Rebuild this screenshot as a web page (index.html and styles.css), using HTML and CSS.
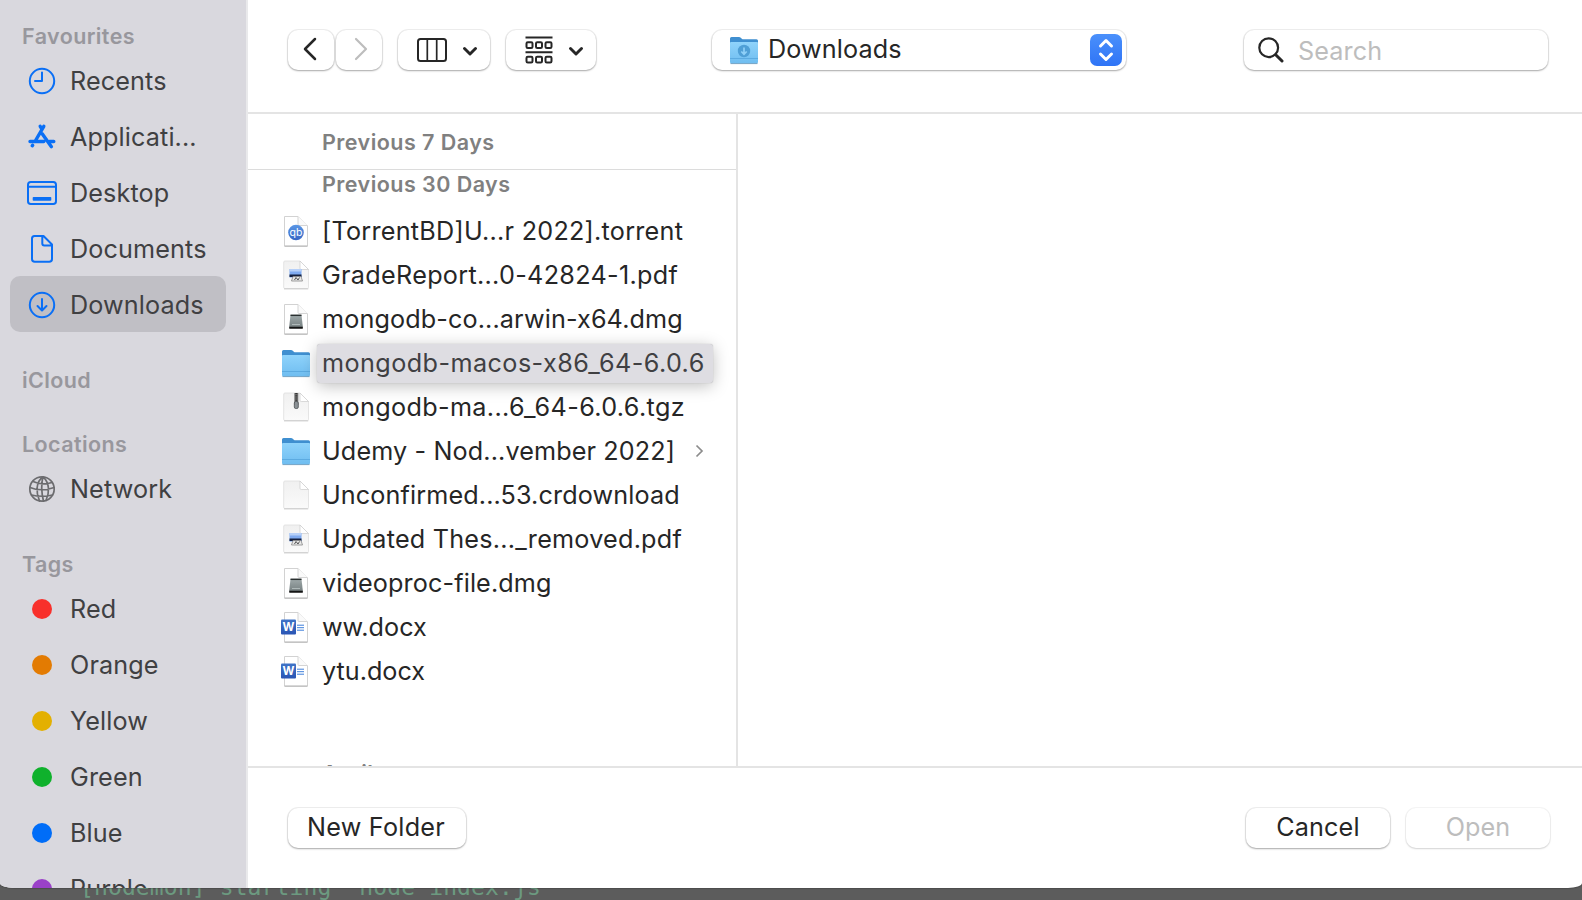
FILE: index.html
```html
<!DOCTYPE html>
<html lang="en">
<head>
<meta charset="utf-8">
<title>Open</title>
<link rel="stylesheet" href="styles.css">
</head>
<body>
<svg class="defs" aria-hidden="true">
  <defs>
    <linearGradient id="folderFront" x1="0" y1="0" x2="0" y2="1"><stop offset="0" stop-color="#8fd3fb"/><stop offset="1" stop-color="#6fbdf0"/></linearGradient>
    <linearGradient id="paper" x1="0" y1="0" x2="0" y2="1"><stop offset="0" stop-color="#f0f0f0"/><stop offset="1" stop-color="#fafafa"/></linearGradient>
    <linearGradient id="drive" x1="0" y1="0" x2="0" y2="1"><stop offset="0" stop-color="#9fa9aa"/><stop offset=".8" stop-color="#7b8586"/><stop offset="1" stop-color="#111"/></linearGradient>
    <linearGradient id="wordBlue" x1="0" y1="0" x2="0" y2="1"><stop offset="0" stop-color="#3f74c8"/><stop offset="1" stop-color="#2a55b4"/></linearGradient>
    <linearGradient id="qbBlue" x1="0" y1="0" x2="0" y2="1"><stop offset="0" stop-color="#5b97e6"/><stop offset="1" stop-color="#3566c4"/></linearGradient>
    <symbol id="folder" viewBox="0 0 32 32">
      <path d="M2 27V4.500q0-1.500 1.500-1.500h7.500q1 0 1.800.8l1 .9q.7.600 1.700.600H28.500q1.500 0 1.500 1.500V27z" fill="#3f8fd0"/>
      <path d="M2 9q0-1 1-1H29q1 0 1 1V28q0 1.500-1.500 1.500H3.500Q2 29.500 2 28z" fill="url(#folderFront)"/>
      <path d="M2 24.500H30" stroke="#56a5dc" stroke-width=".8"/>
      <path d="M2.500 29.600H29.500" stroke="#6d9dbd" stroke-width=".9"/>
    </symbol>
    <symbol id="white-page" viewBox="0 0 32 32">
      <path d="M4.500 1.500H18L27.500 11V31H4.500z" fill="#fff" stroke="#d2d2d2"/>
      <path d="M4.500 31.200H27.500" stroke="#a6a6a6" stroke-width=".8"/>
      <path d="M18 1.500V9.500q0 1 1 1H27.500" fill="#fafafa" stroke="#d4d4d4"/>
    </symbol>
    <symbol id="grey-page" viewBox="0 0 32 32">
      <path d="M5 2H20L28.500 10.500V28.500q0 1-1 1H5q-1.300 0-1.300-1V3.200Q3.700 2 5 2z" fill="url(#paper)" stroke="#dedede" stroke-width=".8"/>
      <path d="M4 29.900H28.200" stroke="#c0c0c0" stroke-width=".8"/>
      <path d="M20 2V9.300q0 1.200 1.200 1.200H28.500z" fill="#fff" stroke="#cccccc" stroke-width=".7"/>
    </symbol>
    <symbol id="torrent" viewBox="0 0 32 32">
      <use href="#white-page"/>
      <circle cx="16" cy="17.500" r="7.800" fill="url(#qbBlue)"/>
      <text x="16" y="21" class="qb-mark">qb</text>
    </symbol>
    <symbol id="pdf" viewBox="0 0 32 32">
      <use href="#grey-page"/>
      <rect x="9.500" y="10" width="12" height="8.500" fill="#7faaf0"/>
      <rect x="9.500" y="10" width="12" height="2.500" fill="#b7d0f8"/>
      <path d="M9.500 15.500H21.500V18H9.500z" fill="#15203f"/>
      <path d="M13 17.500h8l1.500 4.500H11.500z" fill="#e8e8e8" stroke="#888" stroke-width=".8"/>
      <path d="M14.500 21l1.500-2.500 2 2.500 1.500-2.500" fill="none" stroke="#444" stroke-width=".9"/>
    </symbol>
    <symbol id="dmg" viewBox="0 0 32 32">
      <use href="#white-page"/>
      <path d="M10.500 12H21.500L22.800 23.500V25.500H9.200V23.500z" fill="url(#drive)"/>
      <path d="M10.500 12.300H21.500" stroke="#2a3030" stroke-width="1.500"/>
      <path d="M9.500 24.800H22.600" stroke="#111" stroke-width="1.400"/>
      <path d="M12 21.500h8" stroke="#aeb8b8" stroke-width="1"/>
    </symbol>
    <symbol id="zip" viewBox="0 0 32 32">
      <use href="#grey-page"/>
      <rect x="14.300" y="2" width="4" height="12" fill="#777"/>
      <path d="M16.300 2V12" stroke="#333" stroke-width="2" stroke-dasharray="1.200 1"/>
      <rect x="14.300" y="10.500" width="4" height="7" rx="1.500" fill="#8b9195" stroke="#4e5356" stroke-width=".8"/>
    </symbol>
    <symbol id="word" viewBox="0 0 32 32">
      <use href="#white-page"/>
      <path d="M17 14.200H24M17 16.700H24M17 19.200H24" stroke="#3d7edb" stroke-width="1"/>
      <rect x="1" y="8.500" width="15" height="15" rx="1" fill="url(#wordBlue)"/>
      <text x="8.500" y="20" class="word-mark">W</text>
    </symbol>
    <symbol id="chev-down" viewBox="0 0 16 10"><path d="M2.500 2.500L8 8L13.500 2.500" fill="none" stroke="#262626" stroke-width="2.900" stroke-linecap="round" stroke-linejoin="round"/></symbol>
  </defs>
</svg>

<div class="terminal-line">[nodemon] starting `node index.js`</div>

<div class="dialog">
  <nav class="sidebar">
    <section class="group">
      <h2 class="group-title">Favourites</h2>
      <a class="item"><svg class="side-icon" viewBox="0 0 32 32"><circle cx="16" cy="16" r="12.200"/><path d="M16 7.500V16H9"/></svg>Recents</a>
      <a class="item"><svg class="side-icon" viewBox="0 0 32 32"><path class="bold" d="M14.200 5.300L15.800 8M17.800 5.300L9 20.500M4 20.500H17.800M23.500 20.500H27.800M6.200 24.800L6.700 24.200M16.200 12.700L25.400 25.700"/></svg>Applicati...</a>
      <a class="item"><svg class="side-icon" viewBox="0 0 32 32"><rect x="2" y="5" width="28" height="22" rx="2.800"/><path d="M2 9.700H30"/><rect class="solid" x="6.700" y="20" width="18.600" height="3.800" rx=".8"/></svg>Desktop</a>
      <a class="item"><svg class="side-icon" viewBox="0 0 32 32"><path d="M8.500 3H17.500L26 11.500V26q0 2.800-2.800 2.800H8.800Q6 28.800 6 26V5.500Q6 3 8.500 3zM16.300 3.500V10.500q0 2 2 2H25.500"/></svg>Documents</a>
      <a class="item selected"><svg class="side-icon" viewBox="0 0 32 32"><circle cx="16" cy="16" r="12.200"/><path d="M16 10V21.300M11.500 17L16 21.500L20.500 17"/></svg>Downloads</a>
    </section>
    <section class="group">
      <h2 class="group-title">iCloud</h2>
    </section>
    <section class="group">
      <h2 class="group-title">Locations</h2>
      <a class="item"><svg class="side-icon grey" viewBox="0 0 32 32"><circle cx="16" cy="16" r="12.200"/><path d="M17 3.800C9.500 9 10 20 13.500 28M17 3.800C24 10 23.500 20 20 27.500M17 3.800C14.800 12 15.500 20 17.500 28.200M7 8.500Q16 12.500 26 9.500M4 14.500Q15 19 28.200 14.500M5.500 22Q16 24.500 26.500 22"/></svg>Network</a>
    </section>
    <section class="group">
      <h2 class="group-title">Tags</h2>
      <a class="item"><i class="tag red"></i>Red</a>
      <a class="item"><i class="tag orange"></i>Orange</a>
      <a class="item"><i class="tag yellow"></i>Yellow</a>
      <a class="item"><i class="tag green"></i>Green</a>
      <a class="item"><i class="tag blue"></i>Blue</a>
      <a class="item"><i class="tag purple"></i>Purple</a>
    </section>
  </nav>

  <main class="main">
    <header class="toolbar">
      <button class="btn nav"><svg width="14" height="24" viewBox="0 0 14 24"><path d="M12 2L2 12L12 22" fill="none" stroke="#262626" stroke-width="2.500" stroke-linecap="round" stroke-linejoin="round"/></svg></button>
      <button class="btn nav"><svg width="14" height="24" viewBox="0 0 14 24"><path d="M2 2L12 12L2 22" fill="none" stroke="#bdbdbd" stroke-width="2.200" stroke-linecap="round" stroke-linejoin="round"/></svg></button>
      <button class="btn view">
        <svg width="30" height="24" viewBox="0 0 30 24" fill="none" stroke="#262626"><rect x="1" y="1" width="28" height="22" rx="2.500" stroke-width="2"/><path d="M10.300 2V22M19.700 2V22" stroke-width="1.700"/></svg>
        <svg width="16" height="10"><use href="#chev-down"/></svg>
      </button>
      <button class="btn arrange">
        <svg width="28" height="28" viewBox="0 0 28 28" fill="none" stroke="#262626" stroke-width="2"><path d="M.5 1.500H27.500M.5 16.200H27.500"/><rect x="1.500" y="6.300" width="6" height="5.800" rx="1.300"/><rect x="11" y="6.300" width="6" height="5.800" rx="1.300"/><rect x="20.500" y="6.300" width="6" height="5.800" rx="1.300"/><rect x="1.500" y="20.800" width="6" height="5.800" rx="1.300"/><rect x="11" y="20.800" width="6" height="5.800" rx="1.300"/><rect x="20.500" y="20.800" width="6" height="5.800" rx="1.300"/></svg>
        <svg width="16" height="10"><use href="#chev-down"/></svg>
      </button>
      <div class="btn location">
        <svg width="32" height="32" viewBox="0 0 32 32"><use href="#folder"/><circle cx="16" cy="17" r="6.200" fill="#4f9fd6"/><path d="M16 13.500V20M13.300 17.500L16 20.300L18.700 17.500" fill="none" stroke="#8fd0f8" stroke-width="1.700"/></svg>
        <span class="location-name">Downloads</span>
        <span class="stepper"><svg width="16" height="24" viewBox="0 0 16 24"><path d="M2.500 8L8 2.500L13.500 8M2.500 16L8 21.500L13.500 16" fill="none" stroke="#fff" stroke-width="3" stroke-linecap="round" stroke-linejoin="round"/></svg></span>
      </div>
      <div class="btn search">
        <svg width="26" height="26" viewBox="0 0 26 26" fill="none" stroke="#262626" stroke-linecap="round"><circle cx="10.700" cy="10.700" r="9.400" stroke-width="2.200"/><path d="M17.700 17.700L24 24" stroke-width="3"/></svg>
        <span class="placeholder">Search</span>
      </div>
    </header>

    <div class="browser">
      <div class="column">
        <h3 class="sticky-title">Previous 7 Days</h3>
        <h3 class="list-title">Previous 30 Days</h3>
        <ul class="files">
          <li class="file"><svg class="file-icon"><use href="#torrent"/></svg><span class="name n1">[TorrentBD]U...r 2022].torrent</span></li>
          <li class="file"><svg class="file-icon"><use href="#pdf"/></svg><span class="name n2">GradeReport...0-42824-1.pdf</span></li>
          <li class="file"><svg class="file-icon"><use href="#dmg"/></svg><span class="name n3">mongodb-co...arwin-x64.dmg</span></li>
          <li class="file"><svg class="file-icon"><use href="#folder"/></svg><span class="name n4 highlighted">mongodb-macos-x86_64-6.0.6</span></li>
          <li class="file"><svg class="file-icon"><use href="#zip"/></svg><span class="name n5">mongodb-ma...6_64-6.0.6.tgz</span></li>
          <li class="file"><svg class="file-icon"><use href="#folder"/></svg><span class="name n6">Udemy - Nod...vember 2022]</span><svg class="disclosure" width="9" height="14" viewBox="0 0 9 14"><path d="M1.500 1.500L7 7L1.500 12.500" fill="none" stroke="#8c8c8c" stroke-width="1.700"/></svg></li>
          <li class="file"><svg class="file-icon"><use href="#grey-page"/></svg><span class="name n7">Unconfirmed...53.crdownload</span></li>
          <li class="file"><svg class="file-icon"><use href="#pdf"/></svg><span class="name n8">Updated Thes..._removed.pdf</span></li>
          <li class="file"><svg class="file-icon"><use href="#dmg"/></svg><span class="name n9">videoproc-file.dmg</span></li>
          <li class="file"><svg class="file-icon"><use href="#word"/></svg><span class="name n10">ww.docx</span></li>
          <li class="file"><svg class="file-icon"><use href="#word"/></svg><span class="name n11">ytu.docx</span></li>
        </ul>
        <h3 class="list-title next">April</h3>
      </div>
      <div class="preview"></div>
    </div>

    <footer class="actions">
      <button class="btn new-folder">New Folder</button>
      <button class="btn cancel">Cancel</button>
      <button class="btn open" disabled>Open</button>
    </footer>
  </main>
</div>
</body>
</html>
```

FILE: styles.css
```css
* { box-sizing: border-box; }

body {
  margin: 0;
  width: 1582px;
  height: 900px;
  overflow: hidden;
  position: relative;
  background: #5c5c5c;
  color: #262626;
  font: 400 25.2px/32px Inter, "Liberation Sans", sans-serif;
  letter-spacing: .12px;
}

.defs { position: absolute; width: 0; height: 0; }

/* Terminal output behind the dialog */
.terminal-line {
  position: absolute;
  left: 80px;
  top: 873px;
  color: #6c9a80;
  font: 23px/28px "DejaVu Sans Mono", monospace;
  white-space: pre;
}

.dialog {
  position: relative;
  display: flex;
  height: 888px;
  overflow: hidden;
  background: #fff;
  border-radius: 0 0 14px 14px / 0 0 5px 5px;
  box-shadow: 0 0 2px rgba(0, 0, 0, .6);
}

/* Sidebar */
.sidebar {
  flex: none;
  width: 248px;
  padding: 16px 20px 0 10px;
  border-right: 2px solid #e9e9eb;
  background: #d9d8de;
  overflow: hidden;
}
.group { margin-bottom: 28px; }
.group-title {
  margin: 0;
  padding-left: 12px;
  height: 36px;
  color: #98979d;
  font-size: 21.5px;
  font-weight: 600;
  letter-spacing: .4px;
  line-height: 41px;
}
.item {
  display: flex;
  align-items: center;
  height: 56px;
  padding: 2px 0 0 16px;
  border-radius: 10px;
  color: #404042;
  white-space: nowrap;
}
.item.selected { background: #c0bfc5; }
.side-icon {
  flex: none;
  width: 32px;
  height: 32px;
  margin-right: 12px;
  fill: none;
  stroke: #0a6ff5;
  stroke-width: 2;
  stroke-linecap: round;
  stroke-linejoin: round;
}
.side-icon .bold { stroke-width: 3.4; }
.side-icon .solid { fill: #0a6ff5; stroke: none; }
.side-icon.grey { stroke: #6c6c6f; stroke-width: 1.7; }
.tag {
  width: 20px;
  height: 20px;
  margin: 0 18px 0 6px;
  border-radius: 50%;
}
.red { background: #f8302b; }
.orange { background: #e37b02; }
.yellow { background: #e3b001; }
.green { background: #0fb12c; }
.blue { background: #006df8; }
.purple { background: #9a41c8; }

/* Main pane */
.main {
  flex: 1;
  display: flex;
  flex-direction: column;
  min-width: 0;
}
.toolbar {
  display: flex;
  flex: none;
  height: 114px;
  padding: 30px 34px 0 40px;
  border-bottom: 2px solid #e4e4e4;
}
.btn {
  display: flex;
  align-items: center;
  justify-content: center;
  height: 40px;
  padding: 0;
  border: 0;
  border-radius: 10px;
  background: #fff;
  color: inherit;
  font: inherit;
  letter-spacing: inherit;
  box-shadow: 0 0 0 1px rgba(0, 0, 0, .06), 0 1px 2px rgba(0, 0, 0, .3);
}
.nav { width: 46px; margin-right: 2px; padding-right: 3px; }
.nav + .nav { padding: 0 0 0 3px; }
.nav svg { margin-top: -2px; }
.view { width: 92px; margin-left: 14px; gap: 15px; padding-left: 6px; }
.arrange { width: 90px; margin-left: 16px; gap: 15px; padding-left: 7px; }
.view svg + svg, .arrange svg + svg { margin-top: 2px; }
.arrange svg:first-child { margin-top: -1px; }
.location {
  width: 414px;
  margin-left: 116px;
  padding: 0 4px 0 16px;
  justify-content: flex-start;
}
.location-name { margin: -3px auto 0 8px; }
.stepper {
  display: flex;
  align-items: center;
  justify-content: center;
  width: 32px;
  height: 32px;
  border-radius: 7px;
  background: linear-gradient(#4a90fb, #2f74f6);
}
.search {
  width: 304px;
  margin-left: auto;
  padding-left: 14px;
  justify-content: flex-start;
  gap: 14px;
  color: #bdbdbd;
}
.placeholder { padding-top: 1px; }

.browser { flex: 1; display: flex; min-height: 0; }
.column {
  width: 490px;
  border-right: 2px solid #e4e4e4;
  overflow: hidden;
}
.sticky-title, .list-title {
  margin: 0;
  padding-left: 74px;
  color: #808080;
  font-size: 21.5px;
  font-weight: 600;
  letter-spacing: .45px;
}
.sticky-title {
  height: 56px;
  line-height: 57px;
  border-bottom: 1px solid #dcdcdc;
}
.list-title { height: 39px; line-height: 28px; }
.list-title.next { margin-top: 66px; }
.files { margin: 0; padding: 0; list-style: none; }
.file { display: flex; align-items: center; height: 44px; padding-left: 32px; }
.file-icon { flex: none; width: 32px; height: 32px; }
.name { margin-left: 5px; padding: 0 5px; line-height: 40px; white-space: nowrap; }

.n1 { letter-spacing: .25px; }
.n2 { letter-spacing: .3px; }
.n4 { letter-spacing: .43px; }
.n5 { letter-spacing: .36px; }
.n8 { letter-spacing: .23px; }
.n10, .n11 { letter-spacing: 0; }

.highlighted {
  width: 396px;
  height: 39px;
  line-height: 39px;
  border-radius: 3px;
  background: #dedde2;
  color: #404042;
  box-shadow: 0 0 1px rgba(0, 0, 0, .3), 0 3px 16px rgba(0, 0, 0, .25);
}
.disclosure { margin: 0 32px 0 auto; }
.qb-mark { fill: #fff; font: 10.5px Inter, sans-serif; letter-spacing: 0; text-anchor: middle; }
.word-mark { fill: #fff; font: 700 11.5px Inter, sans-serif; letter-spacing: 0; text-anchor: middle; }
.preview { flex: 1; }

.actions {
  display: flex;
  flex: none;
  height: 122px;
  padding: 40px 32px 0 40px;
  border-top: 2px solid #e4e4e4;
}
.actions .btn { padding-bottom: 2px; }
.actions .new-folder { width: 178px; padding-right: 2px; letter-spacing: .25px; }
.cancel { width: 144px; margin-left: auto; }
.open { width: 144px; margin-left: 16px; color: #bdbdbd; box-shadow: 0 0 0 1px rgba(0, 0, 0, .04), 0 1px 2px rgba(0, 0, 0, .14); }
```
